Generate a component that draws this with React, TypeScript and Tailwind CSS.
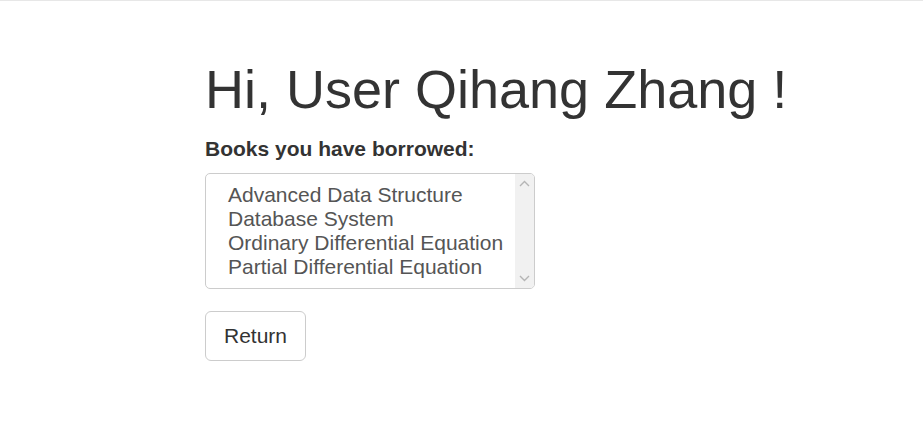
import React from "react";

const books = [
  "Advanced Data Structure",
  "Database System",
  "Ordinary Differential Equation",
  "Partial Differential Equation",
];

export default function App() {
  return (
    <div
      className="min-h-[432px] w-full bg-white border-t border-[#e7e7e7] text-[#333]"
      style={{ fontFamily: '"Liberation Sans", Arial, Helvetica, sans-serif' }}
    >
      <div className="pl-[205px] pt-[59px]">
        <h1 className="text-[54px] leading-[1.1] font-normal text-[#333] mb-[15px]">
          Hi, User Qihang Zhang !
        </h1>
        <div className="text-[21px] leading-[30px] font-bold text-[#333] mb-[9px]">
          Books you have borrowed:
        </div>
        <div className="flex w-[330px] h-[116px] border border-[#ccc] rounded-[5px] overflow-hidden mb-[22px]">
          <div className="flex-1 py-[9px] pl-[19px] text-[21px] leading-[24px] text-[#555]">
            {books.map((b) => (
              <div key={b} className="h-[24px] px-[3px] whitespace-nowrap">
                {b}
              </div>
            ))}
          </div>
          <div className="w-[19px] bg-[#f1f1f1] flex flex-col justify-between items-center py-[6px]">
            <svg width="11" height="7" viewBox="0 0 11 7">
              <path d="M1 6 L5.5 1.5 L10 6" fill="none" stroke="#b5b5b5" strokeWidth="1.4" />
            </svg>
            <svg width="11" height="7" viewBox="0 0 11 7">
              <path d="M1 1 L5.5 5.5 L10 1" fill="none" stroke="#b5b5b5" strokeWidth="1.4" />
            </svg>
          </div>
        </div>
        <button className="h-[50px] px-[18px] border border-[#ccc] rounded-[6px] bg-white text-[21px] leading-[30px] text-[#333]">
          Return
        </button>
      </div>
    </div>
  );
}
